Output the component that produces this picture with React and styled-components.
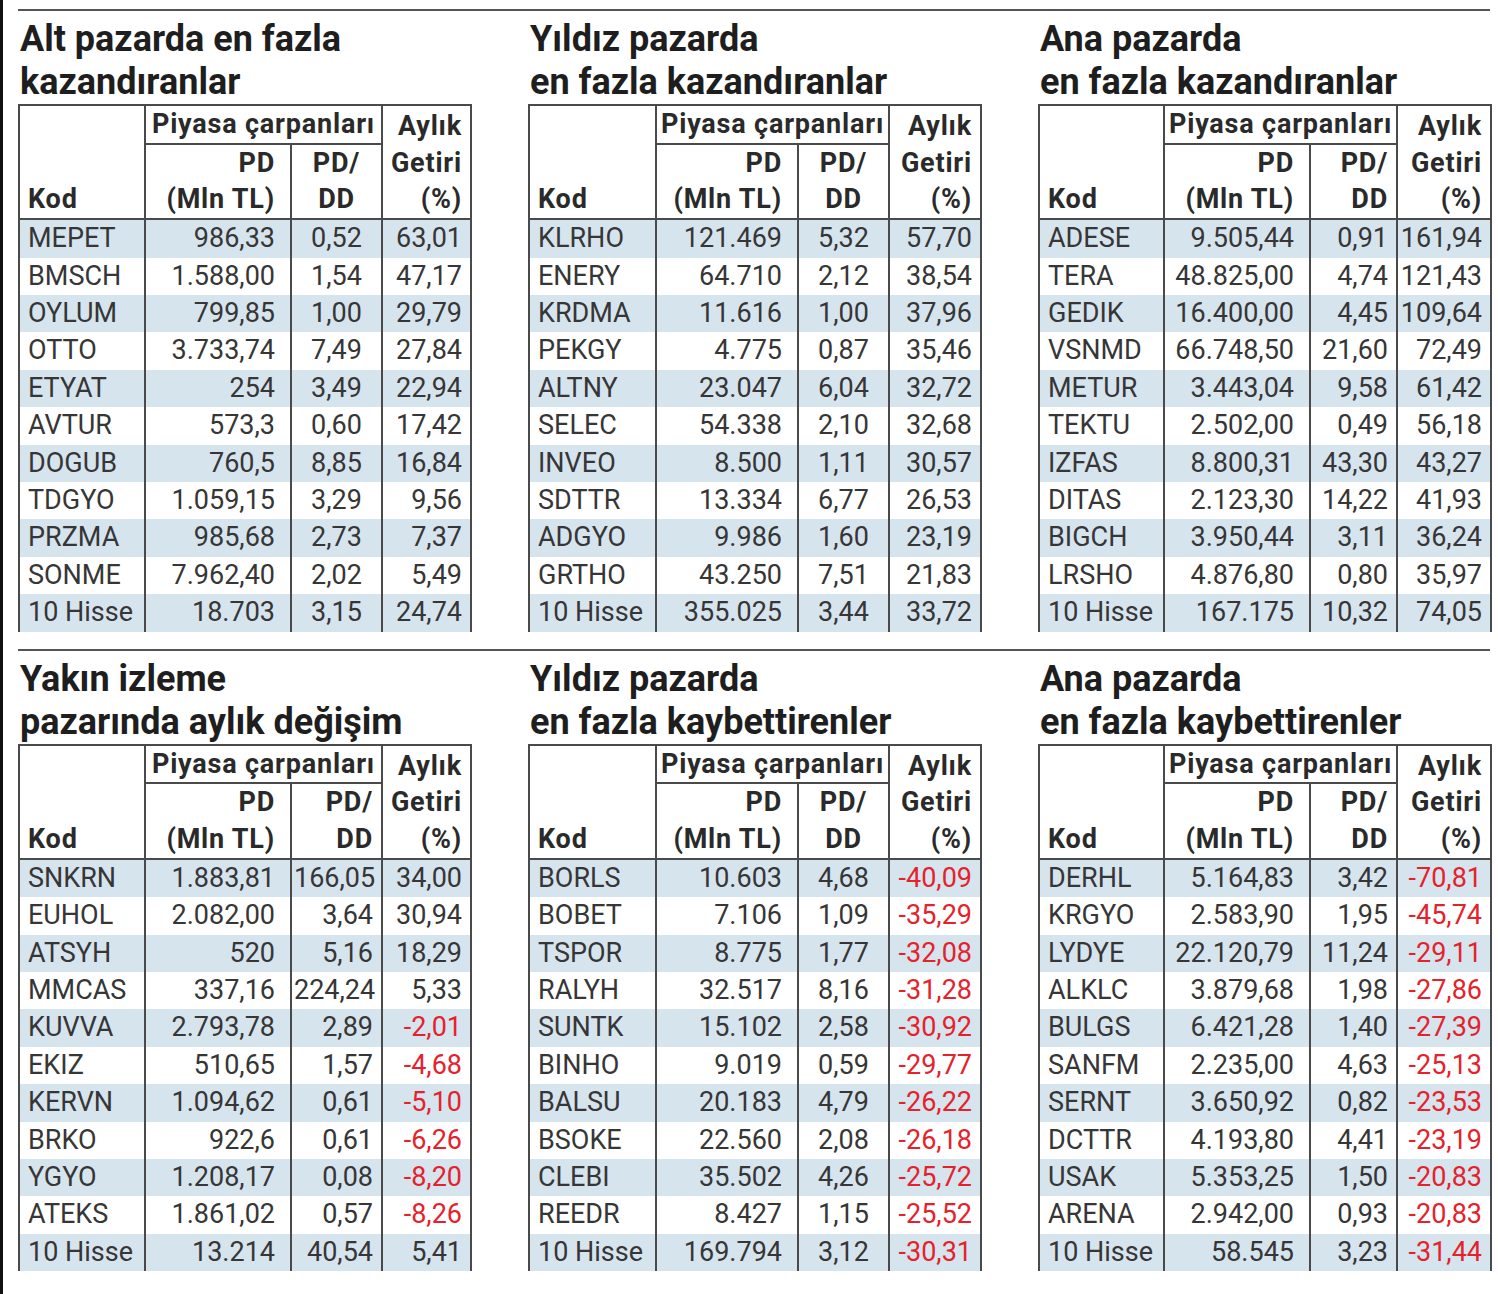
import React from 'react';
import styled, { createGlobalStyle } from 'styled-components';

const Global = createGlobalStyle`
  html, body { margin: 0; padding: 0; background: #fff; }
  body { font-family: Roboto, "Noto Sans", "Liberation Sans", sans-serif; }
`;

const Page = styled.div`
  box-sizing: border-box;
  width: 1498px;
  min-height: 1294px;
  border-left: 3px solid #111;
  padding: 9px 8px 0 15px;
`;

const Section = styled.section`
  border-top: 2px solid #555;
  padding: 7px 0 17px;
  display: grid;
  grid-template-columns: repeat(3, 452px);
  column-gap: 58px;
`;

const Block = styled.div`
  display: flex;
  flex-direction: column;
`;

const Title = styled.h2`
  margin: 0;
  padding-left: 2px;
  font-size: 36px;
  line-height: 43px;
  font-weight: 700;
  color: #1e1e1e;
`;

const Table = styled.table`
  width: 452px;
  table-layout: fixed;
  border-collapse: collapse;
  font-size: 27px;
  color: #333;
`;

const pad = {
  left: '0 4px 0 8px',
  right: '0 15px 0 4px',
  center: '0 4px',
  aylik: '0 8px 0 2px',
};

const Th = styled.th`
  border: 2px solid #4a4a4a;
  padding: ${(p) => pad[p.$pad] || '0 4px'};
  text-align: ${(p) => p.$align};
  vertical-align: bottom;
  line-height: 36.7px;
  font-weight: 700;
  letter-spacing: 0.8px;
  color: #2a2a2a;
  white-space: nowrap;
`;

const Tr = styled.tr`
  height: 37.4px;
  background: ${(p) => (p.$stripe ? '#d6e4ee' : '#fff')};
`;

const Td = styled.td`
  border-left: 2px solid #4a4a4a;
  border-right: 2px solid #4a4a4a;
  padding: ${(p) => pad[p.$pad] || '0 4px'};
  text-align: ${(p) => p.$align};
  line-height: 37.4px;
  white-space: nowrap;
  color: ${(p) => (p.$neg ? '#e5222c' : '#363636')};
`;

const tables = [
  [
    {
      title: ['Alt pazarda en fazla', 'kazandıranlar'],
      cols: [126, 146, 91, 89],
      dd: 'center',
      rows: [
        ['MEPET', '986,33', '0,52', '63,01'],
        ['BMSCH', '1.588,00', '1,54', '47,17'],
        ['OYLUM', '799,85', '1,00', '29,79'],
        ['OTTO', '3.733,74', '7,49', '27,84'],
        ['ETYAT', '254', '3,49', '22,94'],
        ['AVTUR', '573,3', '0,60', '17,42'],
        ['DOGUB', '760,5', '8,85', '16,84'],
        ['TDGYO', '1.059,15', '3,29', '9,56'],
        ['PRZMA', '985,68', '2,73', '7,37'],
        ['SONME', '7.962,40', '2,02', '5,49'],
        ['10 Hisse', '18.703', '3,15', '24,74'],
      ],
    },
    {
      title: ['Yıldız pazarda', 'en fazla kazandıranlar'],
      cols: [127, 142, 91, 92],
      dd: 'center',
      rows: [
        ['KLRHO', '121.469', '5,32', '57,70'],
        ['ENERY', '64.710', '2,12', '38,54'],
        ['KRDMA', '11.616', '1,00', '37,96'],
        ['PEKGY', '4.775', '0,87', '35,46'],
        ['ALTNY', '23.047', '6,04', '32,72'],
        ['SELEC', '54.338', '2,10', '32,68'],
        ['INVEO', '8.500', '1,11', '30,57'],
        ['SDTTR', '13.334', '6,77', '26,53'],
        ['ADGYO', '9.986', '1,60', '23,19'],
        ['GRTHO', '43.250', '7,51', '21,83'],
        ['10 Hisse', '355.025', '3,44', '33,72'],
      ],
    },
    {
      title: ['Ana pazarda', 'en fazla kazandıranlar'],
      cols: [125, 146, 87, 94],
      dd: 'right',
      rows: [
        ['ADESE', '9.505,44', '0,91', '161,94'],
        ['TERA', '48.825,00', '4,74', '121,43'],
        ['GEDIK', '16.400,00', '4,45', '109,64'],
        ['VSNMD', '66.748,50', '21,60', '72,49'],
        ['METUR', '3.443,04', '9,58', '61,42'],
        ['TEKTU', '2.502,00', '0,49', '56,18'],
        ['IZFAS', '8.800,31', '43,30', '43,27'],
        ['DITAS', '2.123,30', '14,22', '41,93'],
        ['BIGCH', '3.950,44', '3,11', '36,24'],
        ['LRSHO', '4.876,80', '0,80', '35,97'],
        ['10 Hisse', '167.175', '10,32', '74,05'],
      ],
    },
  ],
  [
    {
      title: ['Yakın izleme', 'pazarında aylık değişim'],
      cols: [126, 146, 91, 89],
      dd: 'right',
      rows: [
        ['SNKRN', '1.883,81', '166,05', '34,00'],
        ['EUHOL', '2.082,00', '3,64', '30,94'],
        ['ATSYH', '520', '5,16', '18,29'],
        ['MMCAS', '337,16', '224,24', '5,33'],
        ['KUVVA', '2.793,78', '2,89', '-2,01'],
        ['EKIZ', '510,65', '1,57', '-4,68'],
        ['KERVN', '1.094,62', '0,61', '-5,10'],
        ['BRKO', '922,6', '0,61', '-6,26'],
        ['YGYO', '1.208,17', '0,08', '-8,20'],
        ['ATEKS', '1.861,02', '0,57', '-8,26'],
        ['10 Hisse', '13.214', '40,54', '5,41'],
      ],
    },
    {
      title: ['Yıldız pazarda', 'en fazla kaybettirenler'],
      cols: [127, 142, 91, 92],
      dd: 'center',
      rows: [
        ['BORLS', '10.603', '4,68', '-40,09'],
        ['BOBET', '7.106', '1,09', '-35,29'],
        ['TSPOR', '8.775', '1,77', '-32,08'],
        ['RALYH', '32.517', '8,16', '-31,28'],
        ['SUNTK', '15.102', '2,58', '-30,92'],
        ['BINHO', '9.019', '0,59', '-29,77'],
        ['BALSU', '20.183', '4,79', '-26,22'],
        ['BSOKE', '22.560', '2,08', '-26,18'],
        ['CLEBI', '35.502', '4,26', '-25,72'],
        ['REEDR', '8.427', '1,15', '-25,52'],
        ['10 Hisse', '169.794', '3,12', '-30,31'],
      ],
    },
    {
      title: ['Ana pazarda', 'en fazla kaybettirenler'],
      cols: [125, 146, 87, 94],
      dd: 'right',
      rows: [
        ['DERHL', '5.164,83', '3,42', '-70,81'],
        ['KRGYO', '2.583,90', '1,95', '-45,74'],
        ['LYDYE', '22.120,79', '11,24', '-29,11'],
        ['ALKLC', '3.879,68', '1,98', '-27,86'],
        ['BULGS', '6.421,28', '1,40', '-27,39'],
        ['SANFM', '2.235,00', '4,63', '-25,13'],
        ['SERNT', '3.650,92', '0,82', '-23,53'],
        ['DCTTR', '4.193,80', '4,41', '-23,19'],
        ['USAK', '5.353,25', '1,50', '-20,83'],
        ['ARENA', '2.942,00', '0,93', '-20,83'],
        ['10 Hisse', '58.545', '3,23', '-31,44'],
      ],
    },
  ],
];

function MarketTable({ t }) {
  const ddPad = t.dd === 'right' ? 'aylik' : 'center';
  return (
    <Block>
      <Title>
        {t.title[0]}
        <br />
        {t.title[1]}
      </Title>
      <Table>
        <colgroup>
          {t.cols.map((w, i) => (
            <col key={i} style={{ width: w }} />
          ))}
        </colgroup>
        <thead>
          <tr>
            <Th rowSpan={2} $align="left" $pad="left">Kod</Th>
            <Th colSpan={2} $align="center" $pad="center">Piyasa çarpanları</Th>
            <Th rowSpan={2} $align="right" $pad="aylik">
              Aylık
              <br />
              Getiri
              <br />
              (%)
            </Th>
          </tr>
          <tr>
            <Th $align="right" $pad="right">
              PD
              <br />
              (Mln TL)
            </Th>
            <Th $align={t.dd} $pad={ddPad}>
              PD/
              <br />
              DD
            </Th>
          </tr>
        </thead>
        <tbody>
          {t.rows.map((r, i) => (
            <Tr key={r[0]} $stripe={i % 2 === 0}>
              <Td $align="left" $pad="left">{r[0]}</Td>
              <Td $align="right" $pad="right">{r[1]}</Td>
              <Td $align={t.dd} $pad={ddPad}>{r[2]}</Td>
              <Td $align="right" $pad="aylik" $neg={r[3].startsWith('-')}>{r[3]}</Td>
            </Tr>
          ))}
        </tbody>
      </Table>
    </Block>
  );
}

export default function App() {
  return (
    <>
      <Global />
      <Page>
        {tables.map((sec, si) => (
          <Section key={si}>
            {sec.map((t, ti) => (
              <MarketTable key={ti} t={t} />
            ))}
          </Section>
        ))}
      </Page>
    </>
  );
}
